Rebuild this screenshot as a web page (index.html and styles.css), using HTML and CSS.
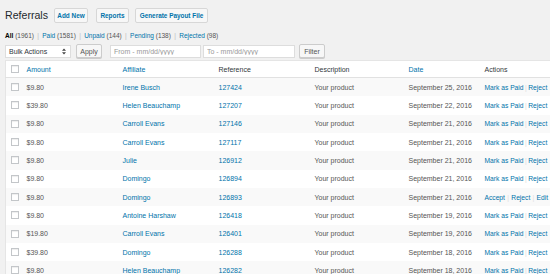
FILE: index.html
```html
<!DOCTYPE html>
<html>
<head>
<meta charset="utf-8">
<link rel="stylesheet" href="styles.css">
</head>
<body>
<div class="wrap">
  <div class="title-row">
    <h1 class="title">Referrals</h1>
    <a class="title-btn btn-add">Add New</a>
    <a class="title-btn btn-reports">Reports</a>
    <a class="title-btn btn-payout">Generate Payout File</a>
  </div>
  <ul class="subsubsub">
    <li><span class="current">All</span> <span class="count">(1961)</span><span class="sep">|</span></li>
    <li><a>Paid</a> <span class="count">(1581)</span><span class="sep">|</span></li>
    <li><a>Unpaid</a> <span class="count">(144)</span><span class="sep">|</span></li>
    <li><a>Pending</a> <span class="count">(138)</span><span class="sep">|</span></li>
    <li><a>Rejected</a> <span class="count">(98)</span></li>
  </ul>
  <div class="tablenav">
    <div class="select">
      <span>Bulk Actions</span>
      <svg class="arrows" width="4" height="7" viewBox="0 0 4 7"><path d="M0 2.8 L2 0.4 L4 2.8 Z M0 4.2 L2 6.6 L4 4.2 Z" fill="#444"/></svg>
    </div>
    <button class="button btn-apply">Apply</button>
    <input class="date-input from" type="text" placeholder="From - mm/dd/yyyy">
    <input class="date-input to" type="text" placeholder="To - mm/dd/yyyy">
    <button class="button btn-filter">Filter</button>
  </div>
  <div class="table-clip">
    <table class="list">
      <colgroup>
        <col class="c-cb"><col class="c-amount"><col class="c-aff"><col class="c-ref"><col class="c-desc"><col class="c-date"><col class="c-actions">
      </colgroup>
      <thead>
        <tr>
          <th class="cb"><span class="checkbox"></span></th>
          <th><a>Amount</a></th>
          <th><a>Affiliate</a></th>
          <th>Reference</th>
          <th>Description</th>
          <th><a>Date</a></th>
          <th>Actions</th>
        </tr>
      </thead>
      <tbody>
        <tr><td class="cb"><span class="checkbox"></span></td><td>$9.80</td><td><a>Irene Busch</a></td><td><a>127424</a></td><td>Your product</td><td>September 25, 2016</td><td class="actions"><a>Mark as Paid</a><span class="asep">|</span><a>Reject</a></td></tr>
        <tr><td class="cb"><span class="checkbox"></span></td><td>$39.80</td><td><a>Helen Beauchamp</a></td><td><a>127207</a></td><td>Your product</td><td>September 22, 2016</td><td class="actions"><a>Mark as Paid</a><span class="asep">|</span><a>Reject</a></td></tr>
        <tr><td class="cb"><span class="checkbox"></span></td><td>$9.80</td><td><a>Carroll Evans</a></td><td><a>127146</a></td><td>Your product</td><td>September 21, 2016</td><td class="actions"><a>Mark as Paid</a><span class="asep">|</span><a>Reject</a></td></tr>
        <tr><td class="cb"><span class="checkbox"></span></td><td>$9.80</td><td><a>Carroll Evans</a></td><td><a>127117</a></td><td>Your product</td><td>September 21, 2016</td><td class="actions"><a>Mark as Paid</a><span class="asep">|</span><a>Reject</a></td></tr>
        <tr><td class="cb"><span class="checkbox"></span></td><td>$9.80</td><td><a>Julie</a></td><td><a>126912</a></td><td>Your product</td><td>September 21, 2016</td><td class="actions"><a>Mark as Paid</a><span class="asep">|</span><a>Reject</a></td></tr>
        <tr><td class="cb"><span class="checkbox"></span></td><td>$9.80</td><td><a>Domingo</a></td><td><a>126894</a></td><td>Your product</td><td>September 21, 2016</td><td class="actions"><a>Mark as Paid</a><span class="asep">|</span><a>Reject</a></td></tr>
        <tr><td class="cb"><span class="checkbox"></span></td><td>$9.80</td><td><a>Domingo</a></td><td><a>126893</a></td><td>Your product</td><td>September 21, 2016</td><td class="actions"><a>Accept</a><span class="asep wide">|</span><a>Reject</a><span class="asep wide">|</span><a>Edit</a></td></tr>
        <tr><td class="cb"><span class="checkbox"></span></td><td>$9.80</td><td><a>Antoine Harshaw</a></td><td><a>126418</a></td><td>Your product</td><td>September 19, 2016</td><td class="actions"><a>Mark as Paid</a><span class="asep">|</span><a>Reject</a></td></tr>
        <tr><td class="cb"><span class="checkbox"></span></td><td>$19.80</td><td><a>Carroll Evans</a></td><td><a>126401</a></td><td>Your product</td><td>September 19, 2016</td><td class="actions"><a>Mark as Paid</a><span class="asep">|</span><a>Reject</a></td></tr>
        <tr><td class="cb"><span class="checkbox"></span></td><td>$39.80</td><td><a>Domingo</a></td><td><a>126288</a></td><td>Your product</td><td>September 18, 2016</td><td class="actions"><a>Mark as Paid</a><span class="asep">|</span><a>Reject</a></td></tr>
        <tr><td class="cb"><span class="checkbox"></span></td><td>$9.80</td><td><a>Helen Beauchamp</a></td><td><a>126282</a></td><td>Your product</td><td>September 18, 2016</td><td class="actions"><a>Mark as Paid</a><span class="asep">|</span><a>Reject</a></td></tr>
      </tbody>
    </table>
  </div>
</div>
</body>
</html>
```

FILE: styles.css
```css
html, body {
  margin: 0;
  padding: 0;
  overflow: hidden;
}
body {
  background: #f1f1f1;
  font-family: "Liberation Sans", Arial, sans-serif;
  font-size: 7px;
  color: #444;
  width: 550px;
  height: 274px;
}
a {
  color: #0073aa;
  text-decoration: none;
}
.wrap {
  padding-left: 5px;
}
.title-row {
  display: flex;
  align-items: center;
  height: 15px;
  padding-top: 8px;
}
.title {
  margin: 0;
  font-size: 10.6px;
  font-weight: normal;
  color: #23282d;
  line-height: 15px;
}
.title-btn {
  display: flex;
  align-items: center;
  justify-content: center;
  box-sizing: border-box;
  height: 15px;
  background: #f7f7f7;
  border: 1px solid #d7d7d7;
  border-radius: 2px;
  font-size: 6.4px;
  font-weight: bold;
  color: #0073aa;
}
.btn-add { width: 34px; margin-left: 6px; }
.btn-reports { width: 33px; margin-left: 8px; }
.btn-payout { width: 73px; margin-left: 6px; }

.subsubsub {
  list-style: none;
  margin: 8px 0 0 0;
  padding: 0;
  display: flex;
  line-height: 10px;
  height: 10px;
  font-size: 6.5px;
  color: #666;
}
.subsubsub .current {
  color: #000;
  font-weight: bold;
}
.subsubsub .count {
  color: #555;
}
.subsubsub .sep {
  color: #bbb;
  margin: 0 3.3px;
}

.tablenav {
  display: flex;
  align-items: center;
  margin-top: 3px;
  height: 14px;
}
.select {
  box-sizing: border-box;
  width: 66px;
  height: 13px;
  background: #fff;
  border: 1px solid #ddd;
  display: flex;
  align-items: center;
  justify-content: space-between;
  padding: 0 4px 0 3px;
  font-size: 7px;
  color: #32373c;
}
.button {
  box-sizing: border-box;
  height: 14px;
  width: 26px;
  padding: 0;
  background: #f7f7f7;
  border: 1px solid #ccc;
  border-radius: 2px;
  box-shadow: 0 1px 0 #ccc;
  font-family: "Liberation Sans", Arial, sans-serif;
  font-size: 7px;
  color: #555;
}
.btn-apply { margin-left: 5px; }
.date-input {
  box-sizing: border-box;
  height: 13px;
  background: #fff;
  border: 1px solid #ddd;
  padding: 0 3px;
  font-family: "Liberation Sans", Arial, sans-serif;
  font-size: 7px;
  color: #32373c;
  outline: none;
}
.date-input::placeholder {
  color: #999;
}
.from { width: 91px; margin-left: 8px; }
.to { width: 92px; margin-left: 2px; }
.btn-filter { margin-left: 4px; }

.table-clip {
  margin-top: 2px;
  width: 545px;
  overflow: hidden;
}
.list {
  width: 600px;
  table-layout: fixed;
  border-collapse: collapse;
  background: #fff;
  border: 1px solid #e5e5e5;
}
.c-cb { width: 21px; }
.c-amount { width: 96px; }
.c-aff { width: 96px; }
.c-ref { width: 96px; }
.c-desc { width: 94px; }
.c-date { width: 76px; }
.list th {
  height: 16px;
  padding: 0;
  text-align: left;
  font-weight: normal;
  color: #32373c;
  border-bottom: 1px solid #e1e1e1;
  white-space: nowrap;
}
.list td {
  height: 18.33px;
  padding: 0;
  color: #555;
  white-space: nowrap;
  vertical-align: middle;
}
.list tbody tr:nth-child(odd) {
  background: #f9f9f9;
}
.cb {
  padding-left: 5px !important;
}
.checkbox {
  display: block;
  box-sizing: border-box;
  width: 8px;
  height: 8px;
  background: #fff;
  border: 1px solid #c3c6c9;
  box-shadow: inset 0 1px 1px rgba(0,0,0,0.07);
}
.list td.actions {
  font-size: 6.7px;
}
.asep {
  color: #ddd;
  margin: 0 1.5px;
}
.asep.wide {
  margin: 0 2.3px;
}
```
